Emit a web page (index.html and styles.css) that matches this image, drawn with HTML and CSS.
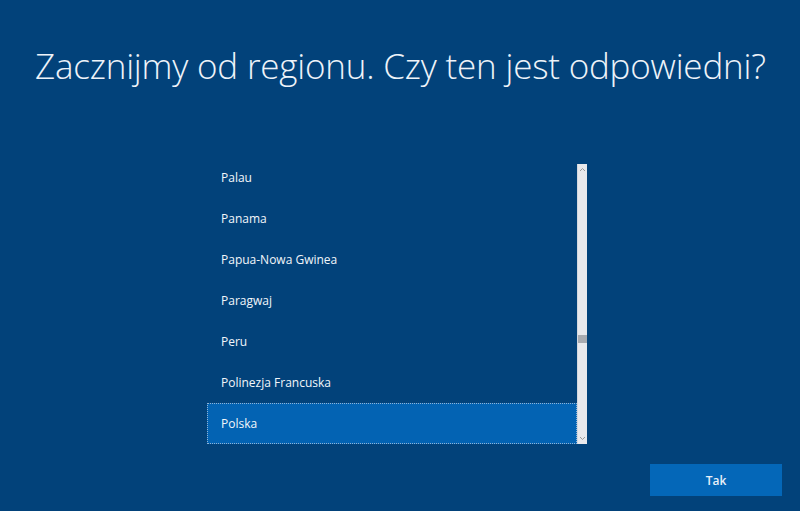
FILE: index.html
```html
<!DOCTYPE html>
<html lang="pl">
<head>
<meta charset="utf-8">
<link rel="stylesheet" href="styles.css">
</head>
<body>
<div class="page">
  <h1 class="title">Zacznijmy od regionu. Czy ten jest odpowiedni?</h1>
  <div class="listbox">
    <div class="viewport">
      <ul class="list">
        <li class="item">Palau</li>
        <li class="item">Panama</li>
        <li class="item">Papua-Nowa Gwinea</li>
        <li class="item">Paragwaj</li>
        <li class="item">Peru</li>
        <li class="item">Polinezja Francuska</li>
        <li class="item selected">Polska</li>
      </ul>
    </div>
    <div class="scrollbar">
      <svg class="arrow" width="9" height="6" viewBox="0 0 9 6"><path d="M2 4 L4.5 1.5 L7 4" fill="none" stroke="#9a9a9a" stroke-width="1"/></svg>
      <div class="track"><div class="thumb"></div></div>
      <svg class="arrow" width="9" height="6" viewBox="0 0 9 6"><path d="M2 2 L4.5 4.5 L7 2" fill="none" stroke="#9a9a9a" stroke-width="1"/></svg>
    </div>
  </div>
  <div class="footer">
    <button class="btn">Tak</button>
  </div>
</div>
</body>
</html>
```

FILE: styles.css
```css
html, body {
  margin: 0;
  padding: 0;
  background: #02427a;
}
.page {
  width: 800px;
  height: 511px;
  overflow: hidden;
  display: flex;
  flex-direction: column;
  font-family: "Open Sans", "Noto Sans", sans-serif;
}
.title {
  margin: 0;
  padding: 42px 0 0 35px;
  font-size: 35px;
  line-height: 48px;
  font-weight: 300;
  color: #eef3f9;
  letter-spacing: -0.2px;
  white-space: nowrap;
}
.listbox {
  margin: 74px 0 0 207px;
  width: 380px;
  height: 280px;
  display: flex;
}
.viewport {
  width: 370px;
  height: 280px;
  overflow: hidden;
}
.list {
  list-style: none;
  margin: -7px 0 0 0;
  padding: 0;
}
.item {
  height: 41px;
  box-sizing: border-box;
  display: flex;
  align-items: center;
  padding-left: 13px;
  font-size: 12px;
  color: #f2f6fa;
  border: 1px solid transparent;
}
.item.selected {
  background: #0363b3;
  border: 1px dotted #8fb3d6;
}
.scrollbar {
  width: 10px;
  height: 280px;
  background: #e9e9ec;
  box-sizing: border-box;
  border-left: 1px solid #d4d8de;
  display: flex;
  flex-direction: column;
  align-items: center;
}
.arrow {
  flex: none;
  margin: 3px 0;
}
.track {
  flex: 1;
  width: 100%;
  position: relative;
}
.thumb {
  position: absolute;
  left: 0;
  right: 0;
  top: 159px;
  height: 8px;
  background: #a9abb0;
}
.footer {
  display: flex;
  justify-content: flex-end;
  padding: 20px 18px 0 0;
}
.btn {
  width: 132px;
  height: 32px;
  border: none;
  background: #0467b8;
  color: #e8f0f8;
  font-family: "Open Sans", "Noto Sans", sans-serif;
  font-size: 12px;
  font-weight: 600;
  padding: 0;
}
```
